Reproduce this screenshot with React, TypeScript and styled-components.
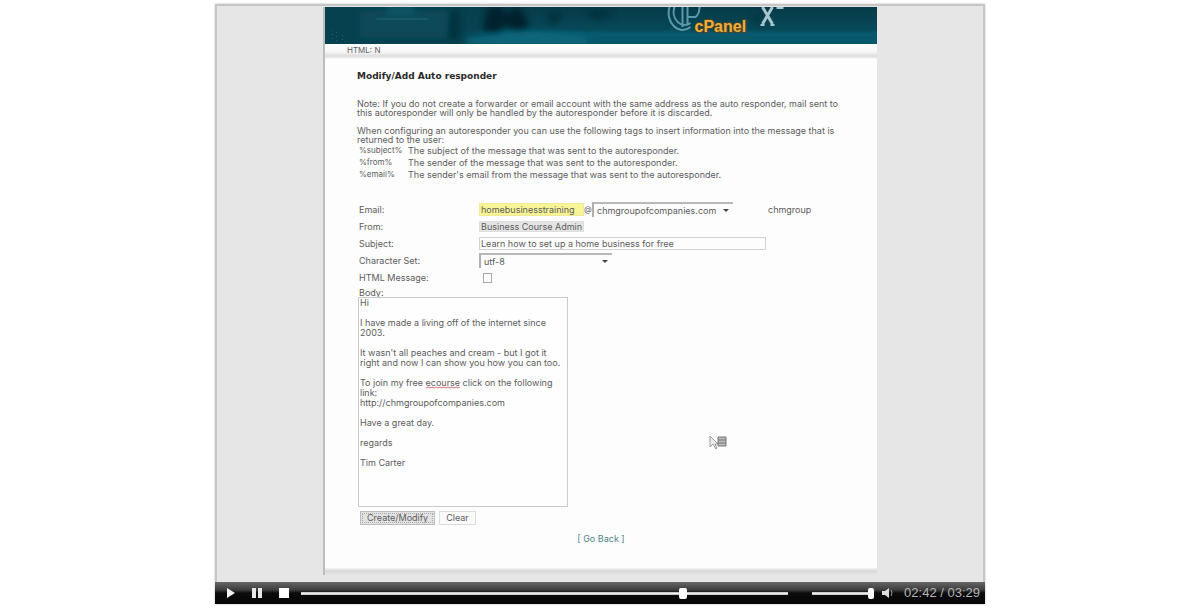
import React from 'react';
import styled, { createGlobalStyle } from 'styled-components';

const GlobalStyle = createGlobalStyle`
  *, *::before, *::after { box-sizing: border-box; }
  body {
    margin: 0;
    background: #fff;
    font-family: Inter, "DejaVu Sans", Verdana, sans-serif;
    font-size: 9px;
    line-height: 9px;
    color: #5c5c5c;
  }
  input, select, textarea, button { font: inherit; color: inherit; margin: 0; border-radius: 0; }
`;

const Player = styled.main`
  max-width: 770px;
  margin: 4px auto;
  box-shadow: 0 0 2px #bbb;
`;

const Stage = styled.div`
  padding: 1px 106px 7px;
  background: #e6e6e6;
  border: 2px solid #c6c6c6;
  border-bottom: 0;
`;

const Page = styled.article`
  background: #fdfdfd;
  border-left: 2px solid #bdbdbd;
`;

const Banner = styled.header`
  height: 37px;
  overflow: hidden;
  background: #06495a;
  svg { display: block; width: 100%; height: 37px; }
`;

const Crumbs = styled.nav`
  height: 15px;
  padding: 2px 22px 0;
  font-size: 8px;
  background: linear-gradient(#fff 0, #f6f6f6 8px, #dedede 12px, #e2e2e2 13px, #fdfdfd 15px);
`;

const Content = styled.div`
  padding: 12px 32px 25px;
`;

const Title = styled.h1`
  margin: 0 0 18px;
  font-family: "DejaVu Sans", Verdana, sans-serif;
  font-size: 9px;
  line-height: 10px;
  color: #2a2a2a;
`;

const Paragraph = styled.p`
  max-width: 490px;
  margin: 0 0 9px;
`;

const TagTable = styled.table`
  margin: -9px 0 21px 2px;
  border-spacing: 0;
  th, td { height: 12px; padding: 0; font-weight: normal; text-align: left; }
  th { width: 49px; font-size: 8px; }
`;

const Form = styled.form`
  padding-left: 1px;
`;

const Row = styled.div`
  display: grid;
  grid-template-columns: 120px 1fr;
  align-items: center;
  height: 17px;
  padding-left: 1px;
`;

const Field = styled.div`
  display: flex;
  align-items: center;
`;

const At = styled.span`
  width: 8px;
  font-size: 8px;
`;

const TextInput = styled.input<{ $tone: 'yellow' | 'grey' | 'plain'; $width: number }>`
  width: ${p => p.$width}px;
  height: ${p => (p.$tone === 'grey' ? 11 : 13)}px;
  padding: 0 1px;
  outline: 0;
  border: 1px solid ${p => ({ yellow: '#eeea96', grey: '#dedede', plain: '#d2d2d2' })[p.$tone]};
  background: ${p => ({ yellow: '#f8f597', grey: '#e4e4e4', plain: '#fdfdfd' })[p.$tone]};
`;

const SelectBox = styled.span<{ $width: number }>`
  display: grid;
  align-items: center;
  width: ${p => p.$width}px;
  height: 15px;
  border-top: 2px solid #b9b9b9;
  border-left: 2px solid #b0b0b0;
  select, svg { grid-area: 1 / 1; }
  select {
    appearance: none;
    width: 100%;
    height: 13px;
    padding: 0 3px;
    border: 0;
    outline: 0;
    background: transparent;
    line-height: 12px;
  }
  svg { justify-self: end; margin-right: 3px; pointer-events: none; }
`;

const Account = styled.span`
  margin-left: 35px;
`;

const Check = styled.input`
  appearance: none;
  width: 9px;
  height: 10px;
  margin-left: 4px;
  border: 1px solid #aaa;
  background: #fff;
`;

const BodyLabel = styled.label`
  display: block;
  padding: 2px 0 0 1px;
`;

const BodyBox = styled.div`
  position: relative;
  width: 210px;
  textarea {
    display: block;
    width: 100%;
    height: 210px;
    padding: 0 1px;
    border: 1px solid #cacaca;
    outline: 0;
    resize: none;
    overflow: hidden;
    white-space: pre;
    line-height: 10px;
    background: #fefefe;
  }
`;

const Squiggle = styled.svg`
  position: absolute;
  left: 68px;
  top: 89px;
`;

const Actions = styled.div`
  display: flex;
  gap: 4px;
  padding: 4px 2px 0;
`;

const Button = styled.button<{ $active?: boolean }>`
  height: 14px;
  padding: 0 6px;
  line-height: 10px;
  border: 1px solid ${p => (p.$active ? '#bcbcbc' : '#dcdcdc')};
  background: ${p => (p.$active ? '#e2e2e2' : '#fafafa')};
  outline: ${p => (p.$active ? '1px dotted #aaa' : '0')};
  outline-offset: -3px;
`;

const Back = styled.p`
  margin: 9px 0 0;
  text-align: center;
  a { color: #4d8587; text-decoration: none; }
`;

const PageEnd = styled.div`
  height: 7px;
  background: linear-gradient(#f4f4f4, #d8d8d8 3px, #e6e6e6);
`;

const Controls = styled.div`
  display: flex;
  align-items: center;
  height: 22px;
  padding: 0 5px 0 10px;
  background: linear-gradient(#666 0, #3c3c3c 8px, #0c0c0c 11px, #050505 100%);
`;

const IconButton = styled.button<{ $width: number }>`
  display: flex;
  flex: none;
  justify-content: center;
  width: ${p => p.$width}px;
  padding: 0;
  border: 0;
  background: none;
`;

const Slider = styled.input<{ $thumb: number }>`
  appearance: none;
  min-width: 0;
  height: 11px;
  background: transparent;
  &::-webkit-slider-runnable-track {
    height: 3px;
    background: linear-gradient(#999, #fff 1px, #bbb);
  }
  &::-webkit-slider-thumb {
    appearance: none;
    width: ${p => p.$thumb}px;
    height: 11px;
    margin-top: -4px;
    border-radius: 2px;
    background: #fff;
  }
`;

const Seek = styled(Slider)`
  flex: 1;
  && { margin: 0 24px 0 10px; }
`;

const Volume = styled(Slider)`
  width: 62px;
`;

const Time = styled.span`
  width: 78px;
  text-align: right;
  white-space: nowrap;
  font: 13px/16px "Liberation Sans", Arial, sans-serif;
  color: #b4b4b4;
`;

const Pointer = styled.svg`
  position: absolute;
  left: 350px;
  top: 138px;
`;

const Arrow = () => (
  <svg width="8" height="5" viewBox="0 0 8 5" aria-hidden="true">
    <path d="M1 1h6L4 4z" fill="#444" />
  </svg>
);

const BannerArt = () => (
  <svg viewBox="0 0 553 37" preserveAspectRatio="xMidYMin slice" aria-label="cPanel X">
    <defs>
      <linearGradient id="sea" x1="0" x2="0" y1="0" y2="1">
        <stop offset="0" stopColor="#073b49" />
        <stop offset="0.6" stopColor="#064858" />
        <stop offset="0.72" stopColor="#085a6e" />
        <stop offset="1" stopColor="#08566a" />
      </linearGradient>
      <linearGradient id="left" x1="0" x2="1" y1="0" y2="0">
        <stop offset="0" stopColor="#06414f" />
        <stop offset="0.7" stopColor="#06414f" />
        <stop offset="1" stopColor="#06414f" stopOpacity="0" />
      </linearGradient>
      <filter id="soft" x="-30%" y="-30%" width="160%" height="160%">
        <feGaussianBlur stdDeviation="3" />
      </filter>
    </defs>
    <rect width="553" height="37" fill="url(#sea)" />
    <rect width="190" height="37" fill="url(#left)" />
    <g filter="url(#soft)">
      <path d="M35 4h90v27H35z" fill="#074a59" />
      <path d="M62 0h28v7H62z" fill="#085868" />
      <path d="M125 3h10v29h-12z" fill="#04303d" />
      <path d="M162 2l14-4 5 8 12-7 9 11 3 12-14 2-10-6-8 8-15-2z" fill="#02222d" />
      <path d="M222 6l14-2 2 8-12 6zM257 5l25-3 8 6-18 5z" fill="#04303c" />
      <path d="M142 31l60-7 60 5v8H142z" fill="#08667b" />
      <path d="M425 12l15-9-6 10 8 8z" fill="#043440" />
    </g>
    <path d="M52 12h52" stroke="#1f6a7a" />
    <path d="M8 23v10M12 25v9M18 28v6" stroke="#1c6270" strokeDasharray="1 3" />
    <g fill="none" stroke="#5b99aa" strokeWidth="2">
      <path d="M345 0a14 17 0 0 0 21 20M350 0a11 13 0 0 0 16 16M358 0v20M363 0v18M363 10h8q4-3 4-10" />
    </g>
    <text x="370" y="25" fill="#f0ae3d" stroke="#4c4423" strokeWidth="2" paintOrder="stroke" fontFamily="Liberation Sans, Arial, sans-serif" fontSize="16" fontWeight="bold">cPanel</text>
    <g fill="none" stroke="#a9c6ce">
      <path d="M438 0l10 17M448 0l-10 17" strokeWidth="3" />
      <path d="M436 18h4M446 18h4M452 1h7" strokeWidth="2" />
    </g>
  </svg>
);

const tags = [
  ['%subject%', 'The subject of the message that was sent to the autoresponder.'],
  ['%from%', 'The sender of the message that was sent to the autoresponder.'],
  ['%email%', "The sender's email from the message that was sent to the autoresponder."],
];

const message = `Hi

I have made a living off of the internet since
2003.

It wasn't all peaches and cream - but I got it
right and now I can show you how you can too.

To join my free ecourse click on the following
link:
http://chmgroupofcompanies.com

Have a great day.

regards

Tim Carter`;

export default function App() {
  return (
    <>
      <GlobalStyle />
      <Player>
        <Stage>
          <Page>
            <Banner><BannerArt /></Banner>
            <Crumbs>HTML: N</Crumbs>
            <Content>
              <Title>Modify/Add Auto responder</Title>
              <Paragraph>
                Note: If you do not create a forwarder or email account with the same address as the auto responder, mail sent to
                this autoresponder will only be handled by the autoresponder before it is discarded.
              </Paragraph>
              <Paragraph>
                When configuring an autoresponder you can use the following tags to insert information into the message that is
                returned to the user:
              </Paragraph>
              <TagTable>
                <tbody>
                  {tags.map(([tag, text]) => (
                    <tr key={tag}><th scope="row">{tag}</th><td>{text}</td></tr>
                  ))}
                </tbody>
              </TagTable>
              <Form onSubmit={e => e.preventDefault()}>
                <Row>
                  <label htmlFor="email">Email:</label>
                  <Field>
                    <TextInput id="email" $tone="yellow" $width={105} defaultValue="homebusinesstraining" />
                    <At>@</At>
                    <SelectBox $width={141}>
                      <select aria-label="Domain"><option>chmgroupofcompanies.com</option></select>
                      <Arrow />
                    </SelectBox>
                    <Account>chmgroup</Account>
                  </Field>
                </Row>
                <Row>
                  <label htmlFor="from">From:</label>
                  <TextInput id="from" $tone="grey" $width={105} defaultValue="Business Course Admin" />
                </Row>
                <Row>
                  <label htmlFor="subject">Subject:</label>
                  <TextInput id="subject" $tone="plain" $width={287} defaultValue="Learn how to set up a home business for free" />
                </Row>
                <Row>
                  <label htmlFor="charset">Character Set:</label>
                  <SelectBox $width={133}>
                    <select id="charset"><option>utf-8</option></select>
                    <Arrow />
                  </SelectBox>
                </Row>
                <Row>
                  <label htmlFor="html">HTML Message:</label>
                  <Check id="html" type="checkbox" />
                </Row>
                <BodyLabel htmlFor="body">Body:</BodyLabel>
                <BodyBox>
                  <textarea id="body" spellCheck={false} defaultValue={message} />
                  <Squiggle width="34" height="3" viewBox="0 0 34 3" aria-hidden="true">
                    <path d="M0 2l2-1 2 1 2-1 2 1 2-1 2 1 2-1 2 1 2-1 2 1 2-1 2 1 2-1 2 1 2-1 2 1 2-1" fill="none" stroke="#d9707c" />
                  </Squiggle>
                  <Pointer width="20" height="16" viewBox="0 0 20 16" aria-hidden="true">
                    <path d="M2 1v11l3-3 3 5 1-1-2-4h3z" fill="#eee" stroke="#999" />
                    <path d="M10 2h8v9h-8zM10 5h8M10 8h8" fill="#bbb" stroke="#777" />
                  </Pointer>
                </BodyBox>
                <Actions>
                  <Button type="submit" $active>Create/Modify</Button>
                  <Button type="reset">Clear</Button>
                </Actions>
              </Form>
              <Back><a href="#back">[ Go Back ]</a></Back>
            </Content>
            <PageEnd />
          </Page>
        </Stage>
        <Controls>
          <IconButton $width={12} aria-label="Play">
            <svg width="8" height="10" viewBox="0 0 8 10"><path d="M0 0l8 5-8 5z" fill="#f2f2f2" /></svg>
          </IconButton>
          <IconButton $width={40} aria-label="Pause">
            <svg width="10" height="10" viewBox="0 0 10 10"><path d="M0 0h4v10H0zM6 0h4v10H6z" fill="#e6e6e6" /></svg>
          </IconButton>
          <IconButton $width={14} aria-label="Stop">
            <svg width="10" height="10" viewBox="0 0 10 10"><path d="M0 0h10v10H0z" fill="#fff" /></svg>
          </IconButton>
          <Seek type="range" aria-label="Seek" $thumb={8} min={0} max={209} defaultValue={165} />
          <Volume type="range" aria-label="Volume" $thumb={6} defaultValue={100} />
          <IconButton $width={28} aria-label="Mute">
            <svg width="12" height="10" viewBox="0 0 12 10">
              <path d="M0 3h3l4-3v10L3 7H0z" fill="#ddd" />
              <path d="M9 2q2 3 0 6" fill="none" stroke="#999" />
            </svg>
          </IconButton>
          <Time>02:42 / 03:29</Time>
        </Controls>
      </Player>
    </>
  );
}
